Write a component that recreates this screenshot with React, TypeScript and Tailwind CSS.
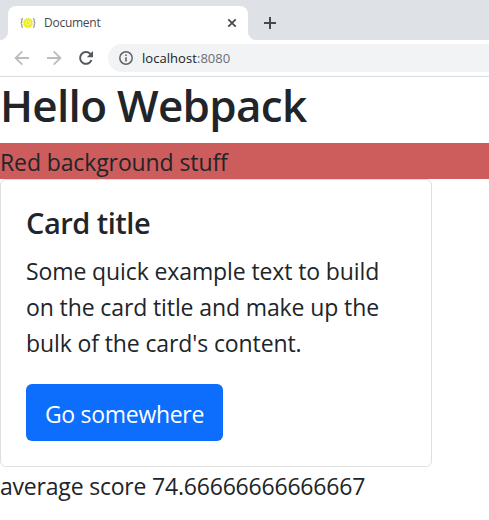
import React from "react";

function Favicon() {
  return (
    <svg width="16" height="16" viewBox="0 0 16 16" fill="none">
      <path d="M3 3.500C1.900 3.500 1.800 4 1.800 5v1.500c0 1-.4 1.500-1.300 1.500.9 0 1.300.5 1.300 1.500V11c0 1 .1 1.500 1.200 1.500M13 3.500c1.100 0 1.200.5 1.200 1.500v1.500c0 1 .4 1.500 1.300 1.500-.9 0-1.300.5-1.300 1.500V11c0 1-.1 1.500-1.200 1.500" stroke="#8c8c8c" strokeWidth="1.100" />
      <circle cx="8" cy="8" r="4.500" fill="#ecec14" />
      <circle cx="8" cy="8" r="4.900" stroke="#eeee45" strokeWidth="1" strokeDasharray="1.500 1" />
      <circle cx="8" cy="8" r="2.200" stroke="#fbfbd0" strokeWidth="1.200" strokeDasharray="1.500 .8" />
    </svg>
  );
}

function TabBar() {
  return (
    <div className="flex h-10 items-end bg-[#dee1e6]">
      <svg width="8" height="8" viewBox="0 0 8 8"><path d="M8 0v8H0a8 8 0 0 0 8-8Z" fill="#fff" /></svg>
      <div className="mt-1.5 flex h-[34px] w-[240px] items-center self-start rounded-t-lg bg-white pl-3 pr-[11px]">
        <Favicon />
        <span className="ml-2 flex-1 text-[12px] leading-4 tracking-[-0.26px] text-[#45494d]">Document</span>
        <svg width="10" height="10" viewBox="0 0 10 10"><path d="m1.300 1.300 7.400 7.400m0-7.400L1.300 8.700" stroke="#45494d" strokeWidth="1.700" /></svg>
      </div>
      <svg width="8" height="8" viewBox="0 0 8 8"><path d="M0 0v8h8a8 8 0 0 1-8-8Z" fill="#fff" /></svg>
      <svg className="mb-[11px] ml-2" width="12" height="12" viewBox="0 0 12 12"><path d="M6 0v12M0 6h12" stroke="#45494d" strokeWidth="2" /></svg>
    </div>
  );
}

function Toolbar() {
  return (
    <div className="flex h-[37px] items-center border-b border-[#dadce0] bg-white pl-[14px]">
      <svg width="16" height="16" viewBox="0 0 16 16" fill="none" stroke="#babcbe" strokeWidth="1.800"><path d="M15 8H2M8.300 1.300 1.600 8l6.700 6.700" /></svg>
      <svg className="ml-4" width="16" height="16" viewBox="0 0 16 16" fill="none" stroke="#babcbe" strokeWidth="1.800"><path d="M1 8h13M7.700 1.300 14.400 8l-6.700 6.700" /></svg>
      <svg className="ml-4" width="16" height="16" viewBox="0 0 16 16" fill="none"><path d="M13.500 10A5.900 5.900 0 1 1 12.200 3.800L14 5.600" stroke="#54585d" strokeWidth="2" /><path d="M15 1v6.200H8.800Z" fill="#54585d" /></svg>
      <div className="ml-[14px] flex h-7 flex-1 items-center rounded-l-full bg-[#f1f3f4] pl-[11px]">
        <svg width="14" height="14" viewBox="0 0 14 14" fill="none"><circle cx="7" cy="7" r="6.200" stroke="#5f6368" strokeWidth="1.500" /><path d="M7 6.200v4.300M7 3.400v1.700" stroke="#5f6368" strokeWidth="1.600" /></svg>
        <span className="ml-[9px] text-[13px] leading-4 tracking-[0.05px] text-[#202124]">localhost<span className="text-[#6b7075]">:8080</span></span>
      </div>
    </div>
  );
}

export default function App() {
  return (
    <div className="h-[520px] w-full overflow-hidden bg-white font-['Open_Sans','Noto_Sans',sans-serif] text-[23px] leading-9 tracking-[-0.11px] text-[#212529]">
      <TabBar />
      <Toolbar />
      <h1 className="mb-3 h-[54px] whitespace-nowrap pt-px text-[44px] font-semibold leading-[54px] tracking-[-0.7px]">Hello Webpack</h1>
      <div className="h-9 whitespace-nowrap bg-[#cd5c5c] pt-px">Red background stuff</div>
      <div className="h-[288px] w-[432px] rounded-[6px] border border-[#dfdfdf] px-[25px] pt-[25px]">
        <h5 className="mb-3 h-[35px] text-[29px] font-semibold leading-[35px] tracking-[-0.5px]">Card title</h5>
        <p className="mb-[23px] whitespace-nowrap pt-px">
          Some quick example text to build<br />
          on the card title and make up the<br />
          bulk of the card's content.
        </p>
        <button className="flex h-[57px] w-[197px] items-center justify-center whitespace-nowrap rounded-[6px] bg-[#0d6efd] pt-0.5 tracking-[-0.3px] text-white">Go somewhere</button>
      </div>
      <div className="whitespace-nowrap pt-px tracking-[-0.2px]">average score 74.66666666666667</div>
    </div>
  );
}
